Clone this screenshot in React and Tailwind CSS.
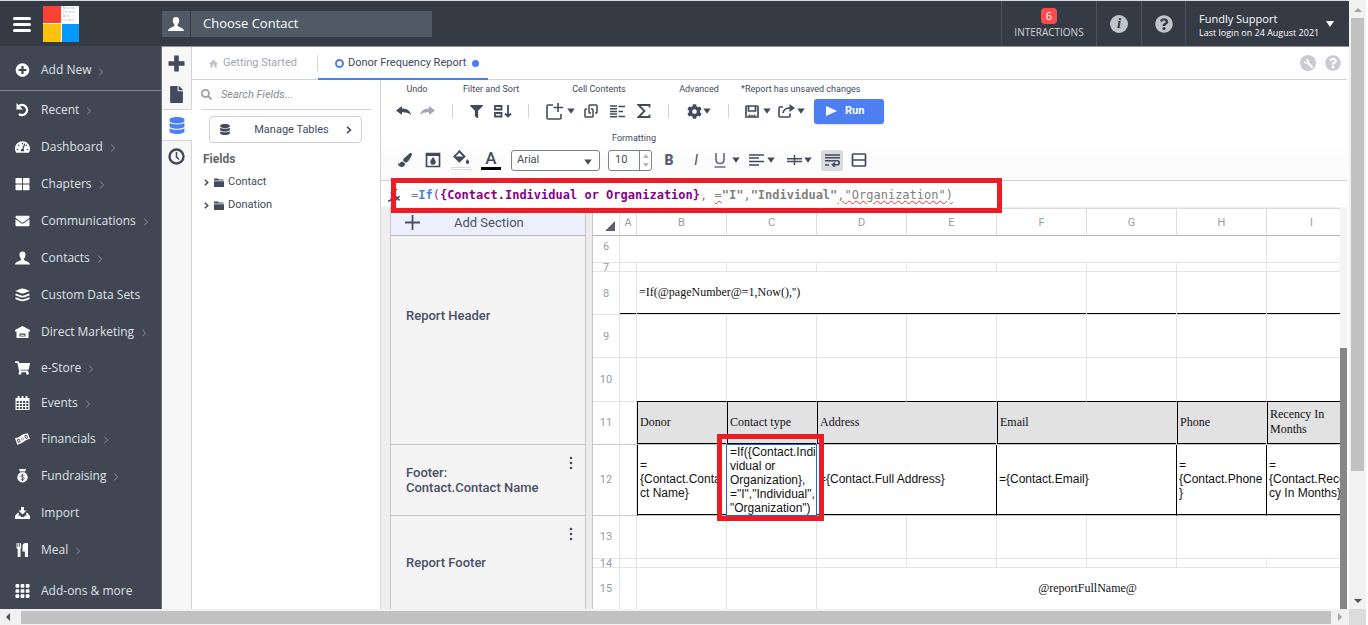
import React from 'react'
import {
  FaPlusCircle, FaTachometerAlt, FaThLarge, FaEnvelope, FaShoppingCart,
  FaDatabase, FaFile, FaSearch, FaCog, FaFilter, FaPaintBrush,
  FaQuestionCircle, FaWrench,
} from 'react-icons/fa'

const RecentIcon = ({ className }) => (
  <svg viewBox="0 0 15 14" className={className}>
    <path d="M3.500 3.500A5 5 0 1 1 4 11" fill="none" stroke="currentColor" strokeWidth="2.400" />
    <path d="M1.500 0v6.500H8z" fill="currentColor" />
  </svg>
)

const UserIcon = ({ className }) => (
  <svg viewBox="0 0 16 14" className={className} fill="currentColor">
    <path d="M8 0c2.2 0 3.4 1.500 3.200 3.800-.1 1.700-.8 3-1.500 3.800v1.500c.3 1 5.800 1.300 6.300 4.900H0c.5-3.600 6-3.900 6.300-4.900V7.600C5.600 6.800 4.900 5.500 4.800 3.800 4.600 1.500 5.800 0 8 0z" />
  </svg>
)

const LayersIcon = ({ className }) => (
  <svg viewBox="0 0 14 13" className={className}>
    <path d="M0 2.800C3 1.800 5 .5 7 .5s4 1.300 7 2.300C11 3.800 9 5 7 5S3 3.800 0 2.800z" fill="currentColor" />
    <path d="M.5 6c2.500.6 4.500 2 6.500 2s4-1.400 6.500-2M.5 9.500c2.500.6 4.500 2 6.500 2s4-1.400 6.500-2" fill="none" stroke="currentColor" strokeWidth="1.700" />
  </svg>
)

const HouseIcon = ({ className }) => (
  <svg viewBox="0 0 15 12" className={className} fill="currentColor" fillRule="evenodd">
    <path d="M7.500 0L15 4v1.500h-1.500V12h-12V5.500H0V4zM4.500 7.500v3h6v-3zM5.500 8.700h4v1h-4z" />
  </svg>
)

const CalendarIcon = ({ className }) => (
  <svg viewBox="0 0 14 14" className={className}>
    <path d="M0 2h14v12H0z" fill="currentColor" />
    <path d="M3 0v3M7 0v3M11 0v3" stroke="currentColor" strokeWidth="1.800" />
    <path d="M1.200 5h2v2h-2zM4.400 5h2v2h-2zM7.600 5h2v2h-2zM10.800 5h2v2h-2zM1.200 8h2v2h-2zM4.400 8h2v2h-2zM7.600 8h2v2h-2zM10.800 8h2v2h-2zM1.200 11h2v2h-2zM4.400 11h2v2h-2zM7.600 11h2v2h-2zM10.800 11h2v2h-2z" fill="#404652" />
  </svg>
)

const MoneyIcon = ({ className }) => (
  <svg viewBox="0 0 17 13" className={className}>
    <path d="M0 5.500C3 5 5 4 7 2.500S12 .3 14.500 0L17 6.500c-3 .3-5 1.500-7 3S5 12.300 2.500 13z" fill="currentColor" />
    <path d="M2.500 7.500l1.500 3 2-1-1.500-3zM11 3l1.400 3 2-.8L13 2z" fill="none" stroke="#404652" strokeWidth="1" />
    <circle cx="8.500" cy="6.300" r="1.400" fill="none" stroke="#404652" strokeWidth=".5" />
  </svg>
)

const BagIcon = ({ className }) => (
  <svg viewBox="0 0 12 14" className={className}>
    <path d="M3 1.500L2.500 0h7L9 1.500 8.300 3.600a5.200 5.200 0 1 1-4.600 0z" fill="currentColor" />
    <path d="M2.500 2.800h7M8 6.700C7 5.700 4.200 5.800 4.300 7.200 4.400 8.700 7.800 8 7.800 9.600c0 1.400-2.800 1.300-3.800.4M6 5v7" fill="none" stroke="#404652" strokeWidth=".8" />
  </svg>
)

const ImportIcon = ({ className }) => (
  <svg viewBox="0 0 15 12" className={className} fill="currentColor">
    <path d="M6 0h3v3.500h2.500l-4 4-4-4H6zM3 5.500l-3 3.500v3h15V9l-3-3.500-1.200 1.200L12 8.500h-2L9 10H6L5 8.500H3l1.200-1.800z" />
  </svg>
)

const ForkIcon = ({ className }) => (
  <svg viewBox="0 0 13 14" className={className} fill="currentColor">
    <path d="M.5 0h1v4h.7V0h1.100v4H4V0h1.100v5L4.500 6.200V14H1.700V6.200L.5 5zM12 0v14H8.900V8.500H6.500V3C6.500 1 8 0 9.500 0z" />
  </svg>
)

const DotsGridIcon = ({ className }) => (
  <svg viewBox="0 0 15 15" className={className} fill="currentColor">
    {[0, 5.500, 11].map((y) => [0, 5.500, 11].map((x) => (
      <rect key={`${x}-${y}`} x={x} y={y} width="4" height="4" rx="1" />
    )))}
  </svg>
)

const ArrowIcon = ({ className }) => (
  <svg viewBox="0 0 15 10" className={className} fill="currentColor">
    <path d="M6 0v2.500c5 0 8 2 9 6.500-2-2.300-5-3-9-2.800V9L0 4.500z" />
  </svg>
)

const Caret = () => (
  <svg viewBox="0 0 8 6" className="h-[6px] w-2 shrink-0" fill="#434a5c"><path d="M.3.500h7.400L4 5.800z" /></svg>
)

const Chevron = ({ className }) => (
  <svg viewBox="0 0 6 8" className={className} fill="none" stroke="currentColor"><path d="M1.200.7L4.700 4 1.200 7.300" /></svg>
)

const nav = [
  { label: 'Recent', icon: RecentIcon, more: true, h: 'h-[37px]' },
  { label: 'Dashboard', icon: FaTachometerAlt, more: true, h: 'h-[37px]' },
  { label: 'Chapters', icon: FaThLarge, more: true, h: 'h-[37px]' },
  { label: 'Communications', icon: FaEnvelope, more: true, h: 'h-[37px]' },
  { label: 'Contacts', icon: UserIcon, more: true, h: 'h-[37px]' },
  { label: 'Custom Data Sets', icon: LayersIcon, h: 'h-[37px]' },
  { label: 'Direct Marketing', icon: HouseIcon, more: true, h: 'h-[37px]' },
  { label: 'e-Store', icon: FaShoppingCart, more: true, h: 'h-[35px]' },
  { label: 'Events', icon: CalendarIcon, more: true, h: 'h-[35px]' },
  { label: 'Financials', icon: MoneyIcon, more: true, h: 'h-[37px]' },
  { label: 'Fundraising', icon: BagIcon, more: true, h: 'h-[37px]' },
  { label: 'Import', icon: ImportIcon, h: 'h-[37px]' },
  { label: 'Meal', icon: ForkIcon, more: true, h: 'h-[37px]' },
  { label: 'Add-ons & more', icon: DotsGridIcon, h: 'h-[45px]' },
]

function NavItem({ label, icon: Icon, more, h }) {
  return (
    <a href="#" className={`${h} flex shrink-0 items-center pl-[15px] text-[12px] text-[#dfe2e6]`}>
      <Icon className="h-[14px] w-[15px] text-white" />
      <span className="ml-[11px]">{label}</span>
      {more && <Chevron className="mt-[3px] ml-[7px] h-2 w-[6px] text-[#8b929c]" />}
    </a>
  )
}

function Header() {
  return (
    <header className="flex h-[45px] shrink-0 items-center bg-[#353b45] font-['Open_Sans',sans-serif] text-white">
      <div className="flex w-[162px] shrink-0 items-center">
        <button aria-label="Menu" className="mt-[2px] ml-[13px] flex w-[18px] flex-col gap-[3px]">
          <span className="h-[3px] w-full rounded-sm bg-white" />
          <span className="h-[3px] w-full rounded-sm bg-white" />
          <span className="h-[3px] w-full rounded-sm bg-white" />
        </button>
        <div className="ml-3 grid h-9 w-9 grid-cols-2 grid-rows-2 gap-px bg-white">
          <span className="bg-[#fe4133]" />
          <span className="min-h-0 overflow-hidden pl-px text-[4px] leading-[4px] text-[#b5b5b5]">Moody<br />Charts<br />Arts<br />Center</span>
          <span className="bg-[#ffc20a]" />
          <span className="bg-[#0099fe]" />
        </div>
      </div>
      <div className="flex h-[26px] w-[270px]">
        <span className="flex w-7 items-center justify-center bg-[#4f5a65]"><UserIcon className="h-[14px] w-4" /></span>
        <input aria-label="Choose Contact" placeholder="Choose Contact" className="ml-px min-w-0 flex-1 bg-[#4f5a65] px-3 text-[13px] text-white outline-none placeholder:text-white" />
      </div>
      <div className="ml-auto flex h-full">
        <a href="#" className="flex w-[95px] flex-col items-center border-l border-[#4a5462] pt-[7px]">
          <span className="h-4 rounded-sm bg-[#fe4b4c] px-[5px] text-[11px] leading-4">6</span>
          <span className="mt-px text-[10px] leading-[14px] text-[#d0d4d9]">INTERACTIONS</span>
        </a>
        <button aria-label="Info" className="flex w-[45px] items-center justify-center border-l border-[#4a5462]">
          <span className="h-[18px] w-[18px] rounded-full bg-[#c1c5cb] text-center font-['Liberation_Serif',serif] text-[15px] leading-[17px] font-bold text-[#353b45] italic">i</span>
        </button>
        <button aria-label="Help" className="flex w-11 items-center justify-center border-l border-[#4a5462]">
          <FaQuestionCircle className="h-[18px] w-[18px] text-[#c1c5cb]" />
        </button>
        <button className="flex w-[164px] items-center border-l border-[#4a5462] pt-[3px] pl-[13px] text-left">
          <span className="w-[119px] shrink-0 whitespace-nowrap">
            <span className="block text-[11px] leading-[14px]">Fundly Support</span>
            <span className="block text-[9px] leading-[13px]">Last login on 24 August 2021</span>
          </span>
          <svg viewBox="0 0 8 6" className="mb-[3px] ml-2 h-[6px] w-2 shrink-0" fill="#fff"><path d="M0 0h8L4 6z" /></svg>
        </button>
      </div>
    </header>
  )
}

function Sidebar() {
  return (
    <nav className="flex w-[162px] shrink-0 flex-col overflow-hidden border-r border-[#69717e] bg-[#404652] font-['Open_Sans',sans-serif]">
      <div className="h-[45px] shrink-0 border-b border-[#7b8698] pt-1">
        <NavItem label="Add New" icon={FaPlusCircle} more h="h-10" />
      </div>
      {nav.map((item) => <NavItem key={item.label} {...item} />)}
    </nav>
  )
}

function Rail() {
  return (
    <div className="flex w-[30px] shrink-0 flex-col text-[#434a5c]">
      <div className="flex h-[63px] flex-col items-center border-r border-b border-[#d3d3d6] bg-[#f7f7f7]">
        <button aria-label="New" className="mt-2">
          <svg viewBox="0 0 17 17" className="h-[17px] w-[17px]" stroke="currentColor" strokeWidth="4.600"><path d="M8.500.5v16M.5 8.500h16" /></svg>
        </button>
        <button aria-label="Report" className="mt-[14px]"><FaFile className="h-[17px] w-[13px]" /></button>
      </div>
      <button aria-label="Data" className="flex h-[30px] items-center justify-center text-[#4d7ff2]"><FaDatabase className="h-[17px] w-4" /></button>
      <div className="flex flex-1 justify-center border-t border-r border-[#d3d3d6] bg-[#f7f7f7] pt-[7px]">
        <svg viewBox="0 0 17 17" className="h-[17px] w-[17px]" fill="none" stroke="currentColor" strokeWidth="2.400"><circle cx="8.500" cy="8.500" r="7" /><path d="M8.500 4v5l2.500 2.500" strokeWidth="1.600" /></svg>
      </div>
    </div>
  )
}

function Tabs() {
  return (
    <div className="flex h-[33px] shrink-0 items-start border-b border-[#d3d3d6] text-[11px]">
      <button className="mt-2 flex h-4 w-[126px] items-center border-r border-[#d3d3d6] pl-[17px] text-[#a3a6ae]">
        <svg viewBox="0 0 10 9" className="h-[9px] w-[9px]" fill="#bfc2c8"><path d="M5 0l5 5H8.500v4h-2.500V6h-2v3H1.500V5H0z" /></svg>
        <span className="ml-[5px]">Getting Started</span>
      </button>
      <button className="flex h-[33px] w-[170px] items-center border-b-2 border-[#4d7ff2] pt-px pl-[17px] text-[#434a5c]">
        <span className="h-[9px] w-[9px] rounded-full border-2 border-[#4d7ff2]" />
        <span className="ml-1">Donor Frequency Report</span>
        <span className="ml-[6px] h-[7px] w-[7px] rounded-full bg-[#4d7ff2]" />
      </button>
      <div className="mt-2 mr-[6px] ml-auto flex gap-[9px]">
        <button aria-label="Settings" className="flex h-4 w-4 items-center justify-center rounded-full bg-[#c9cbd0]"><FaWrench className="h-[9px] w-[9px] -scale-x-100 text-white" /></button>
        <button aria-label="Help"><FaQuestionCircle className="h-4 w-4 text-[#c9cbd0]" /></button>
      </div>
    </div>
  )
}

function FieldsPanel() {
  return (
    <aside className="w-[189px] shrink-0 border-r border-[#d3d3d6] px-[9px] text-[11px] text-[#434a5c]">
      <label className="flex h-[30px] items-center border-b border-[#d3d3d6]">
        <FaSearch className="h-[11px] w-[11px] text-[#9da0a8]" />
        <input aria-label="Search Fields" placeholder="Search Fields..." className="ml-[9px] min-w-0 flex-1 pt-px italic outline-none placeholder:text-[#8a8c92]" />
      </label>
      <button className="mt-[6px] ml-2 flex h-[27px] w-[153px] items-center rounded border border-[#d0d0d4] px-[9px]">
        <FaDatabase className="h-[11px] w-3" />
        <span className="flex-1 pt-px pl-[2px]">Manage Tables</span>
        <svg viewBox="0 0 6 8" className="-ml-1 h-2 w-[6px]" fill="none" stroke="currentColor" strokeWidth="1.600"><path d="M1 .8L4.500 4 1 7.200" /></svg>
      </button>
      <h2 className="mt-2 ml-[2px] text-[12px] leading-4 font-bold text-[#666]">Fields</h2>
      <ul className="mt-1 ml-[3px]">
        {['Contact', 'Donation'].map((name) => (
          <li key={name} className="flex h-[23px] items-center">
            <svg viewBox="0 0 5 7" className="h-[7px] w-[5px]" fill="none" stroke="currentColor" strokeWidth="1.500"><path d="M.8.7L3.800 3.500.8 6.300" /></svg>
            <svg viewBox="0 0 10 9" className="ml-[5px] h-[9px] w-[10px]" fill="currentColor"><path d="M0 .5h4l.8 1H9.500v1H0zM0 3.200h10V9H0z" /></svg>
            <span className="ml-[4px]">{name}</span>
          </li>
        ))}
      </ul>
    </aside>
  )
}

function Group({ label, width, children }) {
  return (
    <div className={`${width} text-center text-[9px]`}>
      <div className="h-[13px] leading-[13px]">{label}</div>
      <div className="mt-2 flex h-[14px] items-center justify-center border-r border-[#d3d3d6]">{children}</div>
    </div>
  )
}

function Toolbar() {
  return (
    <div className="h-[101px] border-b border-[#d0d0d8] bg-gradient-to-b from-white from-60% to-[#fafafa] pt-[3px] text-[#434a5c]">
      <div className="flex h-[48px]">
        <Group label="Undo" width="w-[72px]">
          <button aria-label="Undo"><ArrowIcon className="h-[10px] w-[15px]" /></button>
          <button aria-label="Redo" className="mr-[3px] ml-[9px] text-[#a5a9b1]"><ArrowIcon className="h-[10px] w-[15px] -scale-x-100" /></button>
        </Group>
        <Group label="Filter and Sort" width="w-[76px]">
          <button aria-label="Filter"><FaFilter className="h-[13px] w-[13px]" /></button>
          <button aria-label="Sort" className="ml-[11px]">
            <svg viewBox="0 0 18 13" className="h-[13px] w-[18px]" fill="none" stroke="currentColor" strokeWidth="1.800">
              <path d="M1 1h6.500v3.500H1zM1 8h6.500v3.500H1zM14 0v11M11 8.500l3 3 3-3" />
            </svg>
          </button>
        </Group>
        <Group label="Cell Contents" width="w-[140px]">
          <button className="flex items-center gap-1" aria-label="Insert">
            <svg viewBox="0 0 17 17" className="h-[17px] w-[17px]" fill="none" stroke="currentColor" strokeWidth="1.600">
              <path d="M7 2H2q-1 0-1 1v12q0 1 1 1h12q1 0 1-1v-4M12 0v9M7.500 4.500H17" />
            </svg>
            <Caret />
          </button>
          <button aria-label="Link" className="ml-[9px]">
            <svg viewBox="0 0 14 14" className="h-[14px] w-[14px]" fill="none" stroke="currentColor" strokeWidth="1.500">
              <path d="M7 9H5.800q-.8 0-.8-.8V1.800q0-.8.8-.8h6.400q.8 0 .8.800v6.400q0 .8-.8.800H11M7 5h1.200q.8 0 .8.800v6.400q0 .8-.8.800H1.800q-.8 0-.8-.8V5.800q0-.8.8-.8H3" />
            </svg>
          </button>
          <button aria-label="Text" className="ml-3">
            <svg viewBox="0 0 15 13" className="h-[13px] w-[15px]" stroke="currentColor" strokeWidth="1.500">
              <path d="M0 1h7M8.500 1.500H15M0 3.700h7M0 6.400h7M8.500 6.400H13M0 9.100h7M0 11.800h7M8.500 11.500H15" />
            </svg>
          </button>
          <button aria-label="Sum" className="ml-3">
            <svg viewBox="0 0 14 14" className="h-[14px] w-[14px]" fill="none" stroke="currentColor" strokeWidth="1.800">
              <path d="M12.500 3.500V1H1.500l6 6-6 6h11v-2.500" />
            </svg>
          </button>
        </Group>
        <Group label="Advanced" width="w-[60px]">
          <button className="flex items-center gap-px" aria-label="Advanced"><FaCog className="h-[15px] w-[15px]" /><Caret /></button>
        </Group>
        <div className="pl-3 text-[9px]">
          <div className="h-[13px] leading-[13px]">*Report has unsaved changes</div>
          <div className="mt-2 flex h-[14px] items-center pl-1">
            <button className="flex items-center gap-1" aria-label="Save">
              <svg viewBox="0 0 14 13" className="h-[13px] w-[14px]" fill="none" stroke="currentColor" strokeWidth="1.700">
                <path d="M2 1h10q1 0 1 1v10H1V2q0-1 1-1zM3.500 1v5h7V1M4.500 12V9.500M9.500 12V9.500M7 10v2" />
              </svg>
              <Caret />
            </button>
            <button className="ml-[7px] flex items-center gap-[2px]" aria-label="Export">
              <svg viewBox="0 0 17 14" className="h-[14px] w-[17px]" fill="none" stroke="currentColor" strokeWidth="1.600">
                <path d="M5 3H2q-1 0-1 1v8q0 1 1 1h9q1 0 1-1V9.500M5 9c.5-3 2.500-5 7-5" /><path d="M11.500 0L17 4l-5.500 4z" fill="currentColor" stroke="none" />
              </svg>
              <Caret />
            </button>
            <button className="ml-[9px] flex h-[25px] w-[70px] shrink-0 items-center rounded-[3px] bg-[#4d7ff2] pl-3 text-[11px] font-bold text-white shadow">
              <svg viewBox="0 0 11 10" className="h-[10px] w-[11px]" fill="#fff"><path d="M0 0l11 5-11 5z" /></svg>
              <span className="ml-2">Run</span>
            </button>
          </div>
        </div>
      </div>
      <div className="mt-px h-3 w-[506px] text-center text-[9px] leading-3">Formatting</div>
      <div className="mt-1 flex h-6 items-center pl-[17px]">
        <button aria-label="Format painter"><FaPaintBrush className="h-[14px] w-[14px]" /></button>
        <button aria-label="Fill picker" className="ml-[13px]">
          <svg viewBox="0 0 16 16" className="h-4 w-4" fill="currentColor">
            <path d="M1.500 1.500h13v13h-13z" fill="none" stroke="currentColor" strokeWidth="1.700" /><path d="M1 1h14v3H1zM8 5c1.500 2 2.700 3.500 2.700 5a2.700 2.700 0 0 1-5.400 0C5.300 8.500 6.500 7 8 5z" />
          </svg>
        </button>
        <button aria-label="Fill color" className="ml-[10px]">
          <svg viewBox="0 0 20 20" className="h-5 w-5" fill="currentColor">
            <path d="M7.500.5l1-.5 6.300 6.500-6.500 6.200L2 6.500l4.500-4.300zM4.500 6.500h7.800L8.300 2.800z" fillRule="evenodd" /><path d="M16.500 9c1 1.500 1.700 2.200 1.700 3.200a1.700 1.700 0 0 1-3.400 0c0-1 .7-1.700 1.700-3.200z" /><path d="M.5 17.500h19v2H.5z" fill="#fff" stroke="#cfd1d6" strokeWidth=".8" />
          </svg>
        </button>
        <button aria-label="Text color" className="ml-[10px] flex h-[20px] w-5 flex-col items-center border-b-[3px] border-black text-[17px] leading-[16px] font-medium">A</button>
        <div className="relative ml-[10px] flex">
          <select aria-label="Font" className="h-[21px] w-[89px] appearance-none rounded-[3px] border border-[#7d8290] bg-white pl-[5px] text-[11px]">
            <option>Arial</option>
          </select>
          <span className="pointer-events-none absolute inset-y-0 right-2 flex items-center pt-1"><Caret /></span>
        </div>
        <div className="ml-2 flex h-[21px] w-11 overflow-hidden rounded-[3px] border border-[#7d8290] bg-white">
          <input aria-label="Font size" defaultValue="10" className="w-[31px] border-r border-[#7d8290] pl-[6px] text-[11px] outline-none" />
          <span className="flex flex-1 flex-col items-center justify-center gap-[5px]">
            <svg viewBox="0 0 6 4" className="h-1 w-[6px]" fill="#b3b6bd"><path d="M0 4h6L3 0z" /></svg>
            <svg viewBox="0 0 6 4" className="h-1 w-[6px]" fill="#b3b6bd"><path d="M0 0h6L3 4z" /></svg>
          </span>
        </div>
        <button aria-label="Bold" className="ml-[10px] w-[14px] text-[14px] font-black text-[#5a6072]">B</button>
        <button aria-label="Italic" className="ml-[13px] w-[14px] text-[14px] italic">I</button>
        <button aria-label="Underline" className="ml-[11px] flex items-center gap-[6px]">
          <svg viewBox="0 0 12 16" className="h-4 w-3" fill="none" stroke="#6b7080" strokeWidth="1.700"><path d="M2 1v6.500q0 4 4 4t4-4V1M.500 15h11" /></svg>
          <Caret />
        </button>
        <button aria-label="Align" className="ml-[9px] flex items-center gap-[3px]">
          <svg viewBox="0 0 15 12" className="h-3 w-[15px]" stroke="currentColor" strokeWidth="1.500"><path d="M0 1h15M0 4h10M0 7.500h15M0 11h10" /></svg>
          <Caret />
        </button>
        <button aria-label="Vertical align" className="ml-3 flex items-center gap-[2px]">
          <svg viewBox="0 0 15 12" className="h-3 w-[15px]" stroke="currentColor" strokeWidth="1.400"><path d="M0 4.800h15M0 7.500h15M7.500 1v10" /></svg>
          <Caret />
        </button>
        <button aria-label="Wrap" className="ml-[9px] flex h-[21px] w-[22px] items-center justify-center rounded-[3px] bg-[#d9dbdf]">
          <svg viewBox="0 0 15 13" className="h-[13px] w-[15px]" fill="none" stroke="currentColor" strokeWidth="1.600"><path d="M0 1h15M0 3.800h15M0 6.800h12.500q1.700 0 1.700 2t-1.700 2H8M10 8.500L7.500 10.800 10 13M0 11h4" /></svg>
        </button>
        <button aria-label="Merge" className="ml-2">
          <svg viewBox="0 0 16 14" className="h-[14px] w-4" fill="none" stroke="currentColor" strokeWidth="1.700"><path d="M2.500 1h11q1 0 1 1v10q0 1-1 1h-11q-1 0-1-1V2q0-1 1-1zM1.500 7h13" /></svg>
        </button>
      </div>
    </div>
  )
}

function FormulaBar() {
  return (
    <div className="relative flex h-[26px] items-center bg-white pt-px pl-[7px] font-['DejaVu_Sans_Mono',monospace] text-[12px] whitespace-pre text-[#808080]">
      <svg viewBox="0 0 14 14" className="h-[14px] w-[14px]" fill="none" stroke="#434a5c" strokeWidth="1.500"><path d="M0 13q3 .5 4-4l1.200-5q1-3 4-2.500M2.500 5H8M7.500 8l4 4.500M11.500 8l-4 4.500" /></svg>
      <span className="ml-[9px]">
        <span>=</span>
        <b className="text-[#4d7ff2]">If</b>
        <span className="text-[#9a2fb0]">(</span>
        <b className="text-[#880088]">{'{Contact.Individual or Organization}'}</b>
        <span>{', '}</span>
        <span className="underline decoration-red-500 decoration-wavy decoration-1">=</span>
        <b>"I"</b>,<b>"Individual"</b>
        <span className="underline decoration-red-500 decoration-wavy decoration-1">,"Organization")</span>
      </span>
      {/* highlight around the formula */}
      <div className="pointer-events-none absolute -top-[3px] left-[10px] z-20 h-[35px] w-[611px] border-[5px] border-[#ed1c24]" />
    </div>
  )
}

const Kebab = () => (
  <button aria-label="Section menu" className="absolute top-[11px] right-3">
    <svg viewBox="0 0 4 14" className="h-[14px] w-1" fill="currentColor"><circle cx="2" cy="2" r="1.300" /><circle cx="2" cy="7" r="1.300" /><circle cx="2" cy="12" r="1.300" /></svg>
  </button>
)

function Sections() {
  return (
    <div className="flex w-[196px] shrink-0 flex-col border-x border-[#c5c6cb] bg-[#f4f4f4] text-[13px] font-medium text-[#4a5064]">
      <button className="flex h-[29px] shrink-0 items-center border-b border-[#b9bac0] bg-[#ecf0fc] pt-[3px] pl-[14px] font-normal">
        <svg viewBox="0 0 15 15" className="h-[15px] w-[15px]" stroke="currentColor" strokeWidth="1.800"><path d="M7.500 0v15M0 7.500h15" /></svg>
        <span className="ml-[34px]">Add Section</span>
      </button>
      <div className="flex h-[209px] shrink-0 items-center border-b border-[#c5c6cb] px-[15px] pb-12">Report Header</div>
      <div className="relative flex h-[71px] shrink-0 items-center border-b border-[#c5c6cb] px-[15px] leading-[15px]">Footer:<br />Contact.Contact Name<Kebab /></div>
      <div className="relative min-h-0 flex-1 px-[15px] pt-[39px] leading-[15px]">Report Footer<Kebab /></div>
    </div>
  )
}

const line = 'border-r border-b border-[#e2e3e8]'

function Row({ n, h, pad = '', numLine = 'border-[#e2e3e8]', children }) {
  return (
    <tr className={h}>
      <th className={`border-r border-b ${numLine} p-0 font-normal`}>
        <div className={`${h} ${pad} flex items-center justify-center overflow-hidden font-['Roboto',sans-serif] text-[11px] leading-none text-[#989ca8]`}>{n}</div>
      </th>
      {children}
    </tr>
  )
}

const Blank = ({ count, className = line }) => Array.from({ length: count }, (_, i) => <td key={i} className={className} />)

const headCell = "border-r border-b border-r-[#e2e2e2] border-b-[#c5c6cb] bg-[#e2e2e2] px-[3px] pb-[2px] shadow-[inset_1px_0_0_#000,inset_0_-1px_0_#000] font-['Liberation_Serif',serif] leading-[15px]"
const bodyCell = 'border-r border-b border-r-black border-b-[#c5c6cb] pb-[2px] pl-[2px] shadow-[inset_0_-1px_0_#000] whitespace-pre leading-[14px]'
const ruled = 'border-r border-b border-[#e2e3e8] shadow-[inset_0_-1px_0_#000]'
const aboveHead = 'border-r border-b border-r-[#e2e3e8] border-b-black'

function Sheet() {
  return (
    <div className="mt-px min-w-0 flex-1 overflow-hidden border-t border-l border-t-[#dcdce0] border-l-[#c5c6cb] bg-white">
      <table className="w-[764px] table-fixed border-separate border-spacing-0 font-['Liberation_Sans',sans-serif] text-[12px] text-[#111]">
        <colgroup>
          <col className="w-[27px]" />
          <col className="w-[17px]" />
          {[...'BCDEFGHI'].map((c) => <col key={c} className="w-[90px]" />)}
        </colgroup>
        <thead>
          <tr className="h-[27px] font-['Roboto',sans-serif] text-[11px] text-[#989ca8]">
            <th className="border-r border-b border-r-[#e2e3e8] border-b-[#b4b4b8] p-0">
              <svg viewBox="0 0 10 10" className="mt-2 ml-3 h-[10px] w-[10px]" fill="#5a6072"><path d="M10 0v10H0z" /></svg>
            </th>
            {[...'ABCDEFGHI'].map((c) => <th key={c} className="border-r border-b border-r-[#dcdce0] border-b-[#b4b4b8] px-0 pt-[2px] font-normal">{c}</th>)}
          </tr>
        </thead>
        <tbody>
          <Row n="6" h="h-[26px]" pad="pb-[6px]"><td colSpan={8} className={line} /><td className={line} /></Row>
          <Row n="7" h="h-2"><Blank count={9} /></Row>
          <Row n="8" h="h-[42px]">
            <td className={ruled} />
            <td colSpan={5} className={`${ruled} px-[2px] pb-[2px] font-['Liberation_Serif',serif]`}>=If(@pageNumber@=1,Now(),'')</td>
            <Blank count={3} className={ruled} />
          </Row>
          <Row n="9" h="h-[42px]"><Blank count={9} /></Row>
          <Row n="10" h="h-[43px]"><Blank count={1} /><Blank count={8} className={aboveHead} /></Row>
          <Row n="11" h="h-[42px]" pad="pb-[2px]" numLine="border-r-[#e2e3e8] border-b-[#c5c6cb]">
            <td className="border-r border-b border-r-[#e2e3e8] border-b-[#c5c6cb]" />
            <td className={headCell}>Donor</td>
            <td className={headCell}>Contact type</td>
            <td colSpan={2} className={headCell}>Address</td>
            <td colSpan={2} className={headCell}>Email</td>
            <td className={headCell}>Phone</td>
            <td className={headCell}>Recency In<br />Months</td>
          </Row>
          <Row n="12" h="h-[70px]" pad="pb-[2px]" numLine="border-r-[#e2e3e8] border-b-[#c5c6cb]">
            <td className="border-r border-b border-r-[#e2e3e8] border-b-[#c5c6cb]" />
            <td className={`${bodyCell} border-l border-l-black`}>{'=\n{Contact.Conta\nct Name}'}</td>
            <td className="relative border-r border-b border-[#c5c6cb] py-0 pr-0 pl-[3px] leading-[14px] whitespace-pre">
              {'=If({Contact.Indi\nvidual or\nOrganization},\n="I","Individual",\n"Organization")'}
              <div className="absolute -top-px -right-px -bottom-px -left-px border border-[#1a66e0]" />
              <div className="absolute -top-[11px] -right-[8px] -bottom-[6px] -left-[10px] z-10 border-[5px] border-[#ed1c24]" />
            </td>
            <td colSpan={2} className={bodyCell}>{'={Contact.Full Address}'}</td>
            <td colSpan={2} className={bodyCell}>{'={Contact.Email}'}</td>
            <td className={bodyCell}>{'=\n{Contact.Phone\n}'}</td>
            <td className={bodyCell}>{'=\n{Contact.Recen\ncy In Months}'}</td>
          </Row>
          <Row n="13" h="h-[42px]" pad="pb-[2px]"><Blank count={7} /><td colSpan={2} className={line} /></Row>
          <Row n="14" h="h-2"><Blank count={9} /></Row>
          <Row n="15" h="h-[42px]" pad="pb-[2px]">
            <Blank count={3} />
            <td colSpan={6} className={`${line} pb-[2px] pl-[2px] text-center font-['Liberation_Serif',serif]`}>@reportFullName@</td>
          </Row>
        </tbody>
      </table>
    </div>
  )
}

export default function App() {
  return (
    <div className="flex h-screen flex-col overflow-hidden bg-white pr-[2px] font-['Roboto',sans-serif]">
      <div className="flex min-h-0 flex-1">
        <div className="flex min-w-0 flex-1 flex-col border-t border-[#d5dbdc]">
          <Header />
          <div className="flex min-h-0 flex-1">
            <Sidebar />
            <div className="flex min-w-0 flex-1 border-t border-[#8f9297]">
              <Rail />
              <div className="mr-[2px] flex min-w-0 flex-1 flex-col">
                <Tabs />
                <div className="flex min-h-0 flex-1">
                  <FieldsPanel />
                  <main className="flex min-w-0 flex-1 flex-col bg-[#eee]">
                    <Toolbar />
                    <FormulaBar />
                    <div className="flex min-h-0 flex-1 pl-[9px]">
                      <Sections />
                      <div className="w-[6px] shrink-0 bg-[#ececec]" />
                      <Sheet />
                      <div className="flex w-[7px] shrink-0 flex-col justify-end bg-[#f4f4f4]">
                        <div className="h-[65%] bg-[#868686]" />
                      </div>
                    </div>
                  </main>
                </div>
              </div>
            </div>
          </div>
        </div>
        {/* page scrollbar */}
        <div className="flex w-[17px] shrink-0 flex-col items-center bg-[#f1f1f1] pb-[6px]">
          <svg viewBox="0 0 8 4" className="mt-2 h-1 w-2 shrink-0" fill="#a3a3a3"><path d="M4 0l4 4H0z" /></svg>
          <div className="mt-[6px] min-h-0 w-full flex-1 px-[2px]"><div className="h-[79%] bg-[#c1c1c1]" /></div>
          <svg viewBox="0 0 8 4" className="mt-2 h-1 w-2 shrink-0" fill="#505050"><path d="M4 4l4-4H0z" /></svg>
        </div>
      </div>
      <div className="flex h-4 shrink-0 items-center bg-[#f1f1f1]">
        <svg viewBox="0 0 4 8" className="ml-[6px] h-2 w-1" fill="#505050"><path d="M0 4l4-4v8z" /></svg>
        <div className="ml-[11px] h-[13px] flex-1 bg-[#c1c1c1]" />
        <svg viewBox="0 0 4 8" className="mx-[7px] h-2 w-1" fill="#a3a3a3"><path d="M4 4L0 0v8z" /></svg>
        <div className="h-full w-[17px] bg-[#dcdcdc]" />
      </div>
    </div>
  )
}
